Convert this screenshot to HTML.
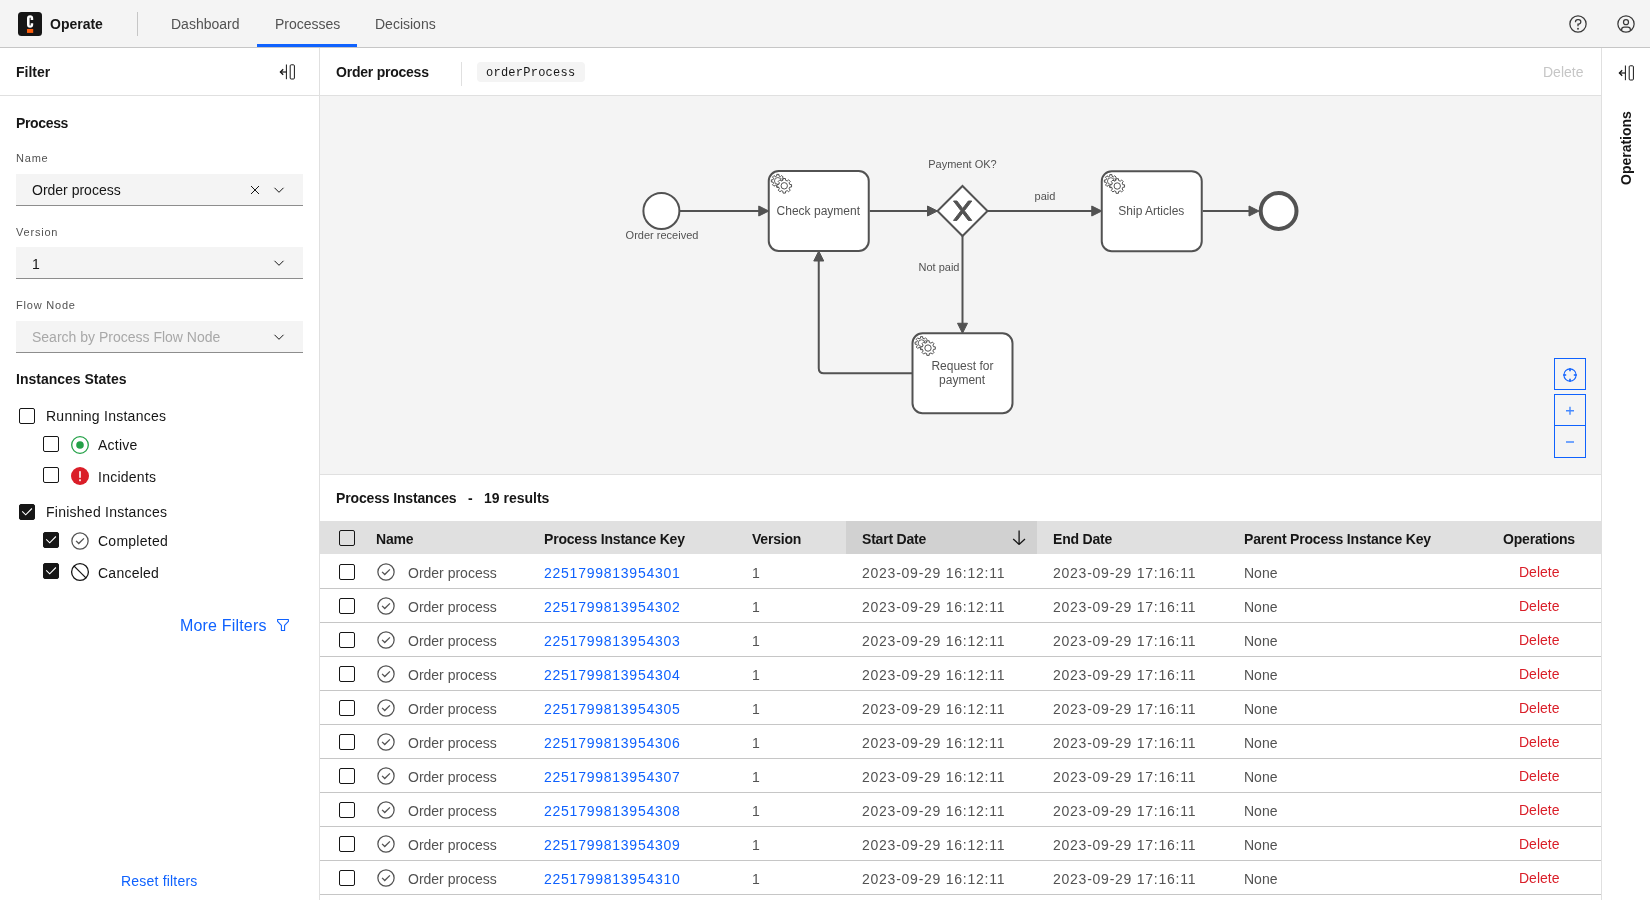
<!DOCTYPE html>
<html><head><meta charset="utf-8">
<style>
*{box-sizing:border-box;margin:0;padding:0}
html,body{width:1650px;height:900px;overflow:hidden;background:#fff;font-family:"Liberation Sans",sans-serif;color:#161616}
.a{position:absolute;white-space:nowrap}
#hdr{position:absolute;left:0;top:0;width:1650px;height:48px;background:#f4f4f4;border-bottom:1px solid #c6c6c6}
.nav{font-size:14px;color:#525252;top:15px;line-height:18px}
.b{font-weight:700}
#left{position:absolute;left:0;top:48px;width:320px;height:852px;background:#fff;border-right:1px solid #e0e0e0}
.lbl{font-size:11px;color:#525252;line-height:14px;letter-spacing:0.8px}
.inp{position:absolute;left:16px;width:287px;height:32px;background:#f4f4f4;border-bottom:1px solid #8d8d8d}
.cb{position:absolute;width:16px;height:16px;border:1px solid #161616;border-radius:2px;background:#fff}
.cb.on{background:#161616}
.ft{font-size:14px;color:#161616;line-height:18px}
#main{position:absolute;left:320px;top:48px;width:1281px;height:852px;background:#fff}
#right{position:absolute;left:1601px;top:48px;width:49px;height:852px;background:#fff;border-left:1px solid #e0e0e0}
.th{font-size:14px;font-weight:700;line-height:18px;top:530px;letter-spacing:-0.2px;color:#161616}
.td{font-size:14px;line-height:18px;color:#525252}
.num{letter-spacing:0.75px}
</style></head><body><div style="position:absolute;left:0;top:0;width:1650px;height:900px;will-change:transform;overflow:hidden">
<div id="hdr">
  <div class="a" style="left:18px;top:12px;width:24px;height:24px;background:#161616;border-radius:3.5px"></div>
  <svg class="a" style="left:0;top:0" width="48" height="48" viewBox="0 0 48 48"><path fill="#fff" d="M30.1 15.3C32.1 15.3 33.2 16.4 33.2 18.3V19.9H30.7V18.2C30.7 17.6 30.5 17.4 30.15 17.4C29.8 17.4 29.6 17.6 29.6 18.2V24.8C29.6 25.4 29.8 25.6 30.15 25.6C30.5 25.6 30.7 25.4 30.7 24.8V23.3H33.2V24.7C33.2 26.6 32.1 27.7 30.1 27.7C28.1 27.7 27 26.6 27 24.7V18.3C27 16.4 28.1 15.3 30.1 15.3Z"/><rect x="27" y="29" width="6.2" height="3.9" fill="#fc5d0d"/></svg>
  <div class="a b" style="left:50px;top:15px;font-size:14px;line-height:18px;color:#161616">Operate</div>
  <div class="a" style="left:137px;top:12px;width:1px;height:24px;background:#c6c6c6"></div>
  <div class="a nav" style="left:171px">Dashboard</div>
  <div class="a nav" style="left:275px">Processes</div>
  <div class="a nav" style="left:375px">Decisions</div>
  <div class="a" style="left:257px;top:44px;width:100px;height:3px;background:#0f62fe"></div>
  <svg class="a" style="left:1568px;top:14px" width="20" height="20" viewBox="0 0 32 32" fill="#393939"><path d="M16,2A14,14,0,1,0,30,16,14,14,0,0,0,16,2Zm0,26A12,12,0,1,1,28,16,12,12,0,0,1,16,28Z"/><circle cx="16" cy="23.5" r="1.5"/><path d="M17,8H15.5A4.49,4.49,0,0,0,11,12.5V13h2v-.5A2.5,2.5,0,0,1,15.5,10H17a2.5,2.5,0,0,1,0,5H15v4.5h2V17a4.5,4.5,0,0,0,0-9Z"/></svg>
  <svg class="a" style="left:1616px;top:14px" width="20" height="20" viewBox="0 0 32 32" fill="#393939"><path d="M16,8a5,5,0,1,0,5,5A5,5,0,0,0,16,8Zm0,8a3,3,0,1,1,3-3A3.0034,3.0034,0,0,1,16,16Z"/><path d="M16,2A14,14,0,1,0,30,16,14.0158,14.0158,0,0,0,16,2ZM10,26.3765V25a3.0033,3.0033,0,0,1,3-3h6a3.0033,3.0033,0,0,1,3,3v1.3765a11.8989,11.8989,0,0,1-12,0Zm13.9925-1.4507A5.0016,5.0016,0,0,0,19,20H13a5.0016,5.0016,0,0,0-4.9925,4.9258,12,12,0,1,1,15.985,0Z"/></svg>
</div>
<div id="left">
  <div class="a b" style="left:16px;top:15px;font-size:14px;line-height:18px">Filter</div>
  <svg class="a" style="left:270px;top:8px" width="40" height="32" viewBox="0 0 40 32" fill="none" stroke="#161616">
    <path d="M10.6 16H16.4" stroke-width="1.2"/><path d="M13.2 13.2L10.4 16L13.2 18.8" stroke-width="1.3"/>
    <path d="M16.4 8.5V23.2" stroke-width="1"/><rect x="20.2" y="8.8" width="4.2" height="14.2" rx="1" stroke-width="1"/>
  </svg>
  <div class="a" style="left:0;top:47px;width:319px;height:1px;background:#e0e0e0"></div>
  <div class="a b" style="left:16px;top:66px;font-size:14px;line-height:18px;letter-spacing:-0.35px">Process</div>
  <div class="a lbl" style="left:16px;top:103px">Name</div>
  <div class="inp" style="top:126px"></div>
  <div class="a ft" style="left:32px;top:133px">Order process</div>
  <svg class="a" style="left:249px;top:136px" width="12" height="12" viewBox="0 0 12 12" stroke="#161616" stroke-width="1"><path d="M2 2L10 10M10 2L2 10"/></svg>
  <svg class="a" style="left:271px;top:134px" width="16" height="16" viewBox="0 0 16 16" fill="none" stroke="#161616" stroke-width="1"><path d="M3.5 5.8L8 10.3L12.5 5.8"/></svg>
  <div class="a lbl" style="left:16px;top:177px">Version</div>
  <div class="inp" style="top:199px"></div>
  <div class="a ft" style="left:32px;top:207px">1</div>
  <svg class="a" style="left:271px;top:207px" width="16" height="16" viewBox="0 0 16 16" fill="none" stroke="#161616" stroke-width="1"><path d="M3.5 5.8L8 10.3L12.5 5.8"/></svg>
  <div class="a lbl" style="left:16px;top:250px">Flow Node</div>
  <div class="inp" style="top:273px"></div>
  <div class="a ft" style="left:32px;top:280px;color:#a8a8a8">Search by Process Flow Node</div>
  <svg class="a" style="left:271px;top:281px" width="16" height="16" viewBox="0 0 16 16" fill="none" stroke="#161616" stroke-width="1"><path d="M3.5 5.8L8 10.3L12.5 5.8"/></svg>
  <div class="a b" style="left:16px;top:322px;font-size:14px;line-height:18px">Instances States</div>
  <div class="cb" style="left:19px;top:360px"></div>
  <div class="a ft" style="left:46px;top:359px;letter-spacing:0.25px">Running Instances</div>
  <div class="cb" style="left:43px;top:388px"></div>
  <svg class="a" style="left:70px;top:387px" width="20" height="20" viewBox="0 0 20 20"><circle cx="10" cy="10" r="8.3" fill="none" stroke="#24a148" stroke-width="1.3"/><circle cx="10" cy="10" r="3.8" fill="#24a148"/></svg>
  <div class="a ft" style="left:98px;top:388px;letter-spacing:0.25px">Active</div>
  <div class="cb" style="left:43px;top:419px"></div>
  <svg class="a" style="left:70px;top:418px" width="20" height="20" viewBox="0 0 20 20"><circle cx="10" cy="10" r="9" fill="#da1e28"/><rect x="9.2" y="5.2" width="1.6" height="6.6" fill="#fff"/><rect x="9.2" y="13.3" width="1.6" height="1.9" fill="#fff"/></svg>
  <div class="a ft" style="left:98px;top:420px;letter-spacing:0.25px">Incidents</div>
  <div class="cb on" style="left:19px;top:456px"><svg width="14" height="14" viewBox="0 0 14 14" style="position:absolute;left:0;top:0"><path d="M2.2 6.4L5.7 9.8L11.9 3.5" fill="none" stroke="#fff" stroke-width="1.1"/></svg></div>
  <div class="a ft" style="left:46px;top:455px;letter-spacing:0.25px">Finished Instances</div>
  <div class="cb on" style="left:43px;top:484px"><svg width="14" height="14" viewBox="0 0 14 14" style="position:absolute;left:0;top:0"><path d="M2.2 6.4L5.7 9.8L11.9 3.5" fill="none" stroke="#fff" stroke-width="1.1"/></svg></div>
  <svg class="a" style="left:70px;top:483px" width="20" height="20" viewBox="0 0 32 32" fill="#525252"><path d="M14 21.414 9 16.413 10.413 15 14 18.586 21.585 11 23 12.415 14 21.414z"/><path d="M16 2a14 14 0 1 0 14 14A14 14 0 0 0 16 2Zm0 26a12 12 0 1 1 12-12 12 12 0 0 1-12 12Z"/></svg>
  <div class="a ft" style="left:98px;top:484px;letter-spacing:0.25px">Completed</div>
  <div class="cb on" style="left:43px;top:515px"><svg width="14" height="14" viewBox="0 0 14 14" style="position:absolute;left:0;top:0"><path d="M2.2 6.4L5.7 9.8L11.9 3.5" fill="none" stroke="#fff" stroke-width="1.1"/></svg></div>
  <svg class="a" style="left:70px;top:514px" width="20" height="20" viewBox="0 0 20 20" fill="none" stroke="#161616"><circle cx="10" cy="10" r="8.4" stroke-width="1.3"/><path d="M4.1 4.1L15.9 15.9" stroke-width="1.3"/></svg>
  <div class="a ft" style="left:98px;top:516px;letter-spacing:0.25px">Canceled</div>
  <div class="a" style="left:180px;top:568px;font-size:16px;line-height:20px;color:#0f62fe;letter-spacing:0.18px">More Filters</div>
  <svg class="a" style="left:275px;top:569px" width="16" height="16" viewBox="0 0 16 16" fill="none" stroke="#0f62fe" stroke-width="1.1"><path d="M2.6 2.5H13.4V4.4L9.6 8.4V13.5H6.4V8.4L2.6 4.4Z" stroke-linejoin="round"/></svg>
  <div class="a" style="left:121px;top:824px;font-size:14px;line-height:18px;color:#0f62fe;letter-spacing:0.2px">Reset filters</div>
</div>
<div id="main">
  <div class="a b" style="left:16px;top:15px;font-size:14px;line-height:18px;letter-spacing:-0.23px">Order process</div>
  <div class="a" style="left:141px;top:14px;width:1px;height:24px;background:#e0e0e0"></div>
  <div class="a" style="left:157px;top:14px;width:108px;height:20px;background:#f4f4f4;border-radius:4px"></div>
  <div class="a" style="left:166px;top:17px;font-family:'Liberation Mono',monospace;font-size:12px;letter-spacing:0.25px;line-height:16px;color:#161616">orderProcess</div>
  <div class="a" style="left:1223px;top:15px;font-size:14px;line-height:18px;color:#c6c6c6">Delete</div>
  <div class="a" style="left:0;top:47px;width:1281px;height:1px;background:#e0e0e0"></div>
  <div class="a" style="left:0;top:48px;width:1281px;height:379px;background:#f4f4f4;border-bottom:1px solid #e0e0e0"></div>
<!--DIAG--><svg class="a" style="left:0;top:48px" width="1281" height="378" viewBox="320 96 1281 378" font-family="Liberation Sans, sans-serif">
<path d="M680 211H760.75" stroke="#525252" stroke-width="2" fill="none"/>
<polygon points="768.75,211 758.75,206 758.75,216" fill="#525252" stroke="#525252" stroke-width="1" stroke-linejoin="round"/>
<path d="M869.75 211H929" stroke="#525252" stroke-width="2" fill="none"/>
<polygon points="937.5,211 927.5,206 927.5,216" fill="#525252" stroke="#525252" stroke-width="1" stroke-linejoin="round"/>
<path d="M987 211H1093.75" stroke="#525252" stroke-width="2" fill="none"/>
<polygon points="1101.75,211 1091.75,206 1091.75,216" fill="#525252" stroke="#525252" stroke-width="1" stroke-linejoin="round"/>
<path d="M1202.75 211H1252" stroke="#525252" stroke-width="2" fill="none"/>
<polygon points="1259,211 1249,206 1249,216" fill="#525252" stroke="#525252" stroke-width="1" stroke-linejoin="round"/>
<path d="M962.5 236V325.25" stroke="#525252" stroke-width="2" fill="none"/>
<polygon points="962.5,333.25 957.5,323.25 967.5,323.25" fill="#525252" stroke="#525252" stroke-width="1" stroke-linejoin="round"/>
<path d="M912.5 373.25H823.75Q818.75 373.25 818.75 368.25V259" stroke="#525252" stroke-width="2" fill="none"/>
<polygon points="818.75,251 813.75,261 823.75,261" fill="#525252" stroke="#525252" stroke-width="1" stroke-linejoin="round"/>
<circle cx="661.4" cy="211" r="18" fill="#fff" stroke="#525252" stroke-width="2"/>
<circle cx="1278.6" cy="211" r="17.9" fill="#fff" stroke="#525252" stroke-width="4"/>
<rect x="768.75" y="171" width="100" height="80" rx="10" fill="#fff" stroke="#525252" stroke-width="2"/><path d="M782.72 179.77 L784.36 179.82 L784.36 181.98 L782.72 182.03 L782.09 183.55 L783.22 184.74 L781.69 186.27 L780.50 185.14 L778.98 185.77 L778.93 187.41 L776.77 187.41 L776.72 185.77 L775.20 185.14 L774.01 186.27 L772.48 184.74 L773.61 183.55 L772.98 182.03 L771.34 181.98 L771.34 179.82 L772.98 179.77 L773.61 178.25 L772.48 177.06 L774.01 175.53 L775.20 176.66 L776.72 176.03 L776.77 174.39 L778.93 174.39 L778.98 176.03 L780.50 176.66 L781.69 175.53 L783.22 177.06 L782.09 178.25Z" fill="#fff" stroke="#525252" stroke-width="1"/><circle cx="777.85" cy="180.9" r="3.4" fill="none" stroke="#525252" stroke-width="0.9"/><path d="M789.80 184.51 L791.55 184.59 L791.55 187.01 L789.80 187.09 L789.09 188.82 L790.27 190.10 L788.55 191.82 L787.27 190.64 L785.54 191.35 L785.46 193.10 L783.04 193.10 L782.96 191.35 L781.23 190.64 L779.95 191.82 L778.23 190.10 L779.41 188.82 L778.70 187.09 L776.95 187.01 L776.95 184.59 L778.70 184.51 L779.41 182.78 L778.23 181.50 L779.95 179.78 L781.23 180.96 L782.96 180.25 L783.04 178.50 L785.46 178.50 L785.54 180.25 L787.27 180.96 L788.55 179.78 L790.27 181.50 L789.09 182.78Z" fill="#fff" stroke="#525252" stroke-width="1"/><circle cx="784.25" cy="185.8" r="3.2" fill="#fff" stroke="#525252" stroke-width="1"/>
<rect x="1101.75" y="171.2" width="100" height="80" rx="10" fill="#fff" stroke="#525252" stroke-width="2"/><path d="M1115.72 179.97 L1117.36 180.02 L1117.36 182.18 L1115.72 182.23 L1115.09 183.75 L1116.22 184.94 L1114.69 186.47 L1113.50 185.34 L1111.98 185.97 L1111.93 187.61 L1109.77 187.61 L1109.72 185.97 L1108.20 185.34 L1107.01 186.47 L1105.48 184.94 L1106.61 183.75 L1105.98 182.23 L1104.34 182.18 L1104.34 180.02 L1105.98 179.97 L1106.61 178.45 L1105.48 177.26 L1107.01 175.73 L1108.20 176.86 L1109.72 176.23 L1109.77 174.59 L1111.93 174.59 L1111.98 176.23 L1113.50 176.86 L1114.69 175.73 L1116.22 177.26 L1115.09 178.45Z" fill="#fff" stroke="#525252" stroke-width="1"/><circle cx="1110.85" cy="181.1" r="3.4" fill="none" stroke="#525252" stroke-width="0.9"/><path d="M1122.80 184.71 L1124.55 184.79 L1124.55 187.21 L1122.80 187.29 L1122.09 189.02 L1123.27 190.30 L1121.55 192.02 L1120.27 190.84 L1118.54 191.55 L1118.46 193.30 L1116.04 193.30 L1115.96 191.55 L1114.23 190.84 L1112.95 192.02 L1111.23 190.30 L1112.41 189.02 L1111.70 187.29 L1109.95 187.21 L1109.95 184.79 L1111.70 184.71 L1112.41 182.98 L1111.23 181.70 L1112.95 179.98 L1114.23 181.16 L1115.96 180.45 L1116.04 178.70 L1118.46 178.70 L1118.54 180.45 L1120.27 181.16 L1121.55 179.98 L1123.27 181.70 L1122.09 182.98Z" fill="#fff" stroke="#525252" stroke-width="1"/><circle cx="1117.25" cy="186.0" r="3.2" fill="#fff" stroke="#525252" stroke-width="1"/>
<rect x="912.5" y="333.25" width="100" height="80" rx="10" fill="#fff" stroke="#525252" stroke-width="2"/><path d="M926.47 342.02 L928.11 342.07 L928.11 344.23 L926.47 344.28 L925.84 345.80 L926.97 346.99 L925.44 348.52 L924.25 347.39 L922.73 348.02 L922.68 349.66 L920.52 349.66 L920.47 348.02 L918.95 347.39 L917.76 348.52 L916.23 346.99 L917.36 345.80 L916.73 344.28 L915.09 344.23 L915.09 342.07 L916.73 342.02 L917.36 340.50 L916.23 339.31 L917.76 337.78 L918.95 338.91 L920.47 338.28 L920.52 336.64 L922.68 336.64 L922.73 338.28 L924.25 338.91 L925.44 337.78 L926.97 339.31 L925.84 340.50Z" fill="#fff" stroke="#525252" stroke-width="1"/><circle cx="921.6" cy="343.15" r="3.4" fill="none" stroke="#525252" stroke-width="0.9"/><path d="M933.55 346.76 L935.30 346.84 L935.30 349.26 L933.55 349.34 L932.84 351.07 L934.02 352.35 L932.30 354.07 L931.02 352.89 L929.29 353.60 L929.21 355.35 L926.79 355.35 L926.71 353.60 L924.98 352.89 L923.70 354.07 L921.98 352.35 L923.16 351.07 L922.45 349.34 L920.70 349.26 L920.70 346.84 L922.45 346.76 L923.16 345.03 L921.98 343.75 L923.70 342.03 L924.98 343.21 L926.71 342.50 L926.79 340.75 L929.21 340.75 L929.29 342.50 L931.02 343.21 L932.30 342.03 L934.02 343.75 L932.84 345.03Z" fill="#fff" stroke="#525252" stroke-width="1"/><circle cx="928.0" cy="348.05" r="3.2" fill="#fff" stroke="#525252" stroke-width="1"/>
<polygon points="962.5,186 987.5,211 962.5,236 937.5,211" fill="#fff" stroke="#525252" stroke-width="2" stroke-linejoin="miter"/>
<path d="m 953.5,201 7.4286,9.714 -7.4286,9.714 3.4286,0 5.714,-7.464 5.714,7.464 3.4286,0 -7.4286,-9.714 7.4286,-9.714 -3.4286,0 -5.714,7.464 -5.714,-7.464 -3.4286,0 z" fill="#525252" stroke="#525252" stroke-width="1"/>
<text x="818.3" y="214.6" font-size="12" fill="#525252" text-anchor="middle">Check payment</text>
<text x="1151.3" y="214.6" font-size="12" fill="#525252" text-anchor="middle">Ship Articles</text>
<text x="962.4" y="369.9" font-size="12" fill="#525252" text-anchor="middle">Request for</text>
<text x="962.1" y="383.7" font-size="12" fill="#525252" text-anchor="middle">payment</text>
<text x="662" y="238.7" font-size="11" fill="#525252" text-anchor="middle">Order received</text>
<text x="962.5" y="168" font-size="11" fill="#525252" text-anchor="middle">Payment OK?</text>
<text x="1045" y="199.9" font-size="11" fill="#525252" text-anchor="middle">paid</text>
<text x="939" y="271.1" font-size="11" fill="#525252" text-anchor="middle">Not paid</text>
</svg><!--/DIAG-->
<div class="a" style="left:1234px;top:310px;width:32px;height:32px;border:1px solid #0f62fe"></div>
<svg class="a" style="left:1234px;top:310px" width="32" height="32" viewBox="0 0 32 32" fill="none" stroke="#0f62fe" stroke-width="1.1"><circle cx="16" cy="17" r="6.1"/><path d="M16 10.2V13.2M16 20.8V23.8M9.2 17H12.2M19.8 17H22.8" stroke-width="1.6"/></svg>
<div class="a" style="left:1234px;top:346px;width:32px;height:64px;border:1px solid #0f62fe"></div>
<div class="a" style="left:1234px;top:377px;width:32px;height:1px;background:#0f62fe"></div>
<svg class="a" style="left:1234px;top:346px" width="32" height="64" viewBox="0 0 32 64" fill="none" stroke="#4589ff" stroke-width="1.4"><path d="M12 16.8H20M16 12.8V20.8M12 48H20"/></svg>

</div>
<div id="right">
  <svg class="a" style="left:7px;top:9px" width="40" height="32" viewBox="0 0 40 32" fill="none" stroke="#161616">
    <path d="M10.6 16H16.4" stroke-width="1.2"/><path d="M13.2 13.2L10.4 16L13.2 18.8" stroke-width="1.3"/>
    <path d="M16.4 8.5V23.2" stroke-width="1"/><rect x="20.2" y="8.8" width="4.2" height="14.2" rx="1" stroke-width="1"/>
  </svg>
  <div class="a b" style="left:-12px;top:92px;width:72px;font-size:14px;line-height:18px;transform:rotate(-90deg);transform-origin:36px 9px">Operations</div>
</div>
<!--TBL--><div id="tbl">
<div class="a b" style="left:336px;top:489px;font-size:14px;line-height:18px;letter-spacing:-0.15px">Process Instances</div>
<div class="a b" style="left:468px;top:489px;font-size:14px;line-height:18px">-</div>
<div class="a b" style="left:484px;top:489px;font-size:14px;line-height:18px">19 results</div>
<div class="a" style="left:320px;top:521px;width:1281px;height:33px;background:#e0e0e0"></div>
<div class="a" style="left:846px;top:521px;width:191px;height:33px;background:#d1d1d1"></div>
<div class="cb" style="left:339px;top:530px;background:transparent"></div>
<div class="a th" style="left:376px">Name</div>
<div class="a th" style="left:544px">Process Instance Key</div>
<div class="a th" style="left:752px">Version</div>
<div class="a th" style="left:862px">Start Date</div>
<div class="a th" style="left:1053px">End Date</div>
<div class="a th" style="left:1244px">Parent Process Instance Key</div>
<div class="a th" style="left:1502px;width:74px;text-align:center">Operations</div>
<svg class="a" style="left:1011px;top:529px" width="16" height="16" viewBox="0 0 16 16" fill="none" stroke="#161616" stroke-width="1.3"><path d="M8.1 1.4V15.2M2.2 10L8.1 15.4L14 10"/></svg>
<div class="a" style="left:320px;top:588px;width:1281px;height:1px;background:#c6c6c6"></div>
<div class="cb" style="left:339px;top:564px"></div>
<svg class="a" style="left:376px;top:562px" width="20" height="20" viewBox="0 0 32 32" fill="#525252"><path d="M14 21.414 9 16.413 10.413 15 14 18.586 21.585 11 23 12.415 14 21.414z"/><path d="M16 2a14 14 0 1 0 14 14A14 14 0 0 0 16 2Zm0 26a12 12 0 1 1 12-12 12 12 0 0 1-12 12Z"/></svg>
<div class="a td" style="left:408px;top:564px">Order process</div>
<div class="a td num" style="left:544px;top:564px;color:#0f62fe">2251799813954301</div>
<div class="a td" style="left:752px;top:564px">1</div>
<div class="a td num" style="left:862px;top:564px">2023-09-29 16:12:11</div>
<div class="a td num" style="left:1053px;top:564px">2023-09-29 17:16:11</div>
<div class="a td" style="left:1244px;top:564px">None</div>
<div class="a td" style="left:1519px;top:563px;color:#da1e28">Delete</div>
<div class="a" style="left:320px;top:622px;width:1281px;height:1px;background:#c6c6c6"></div>
<div class="cb" style="left:339px;top:598px"></div>
<svg class="a" style="left:376px;top:596px" width="20" height="20" viewBox="0 0 32 32" fill="#525252"><path d="M14 21.414 9 16.413 10.413 15 14 18.586 21.585 11 23 12.415 14 21.414z"/><path d="M16 2a14 14 0 1 0 14 14A14 14 0 0 0 16 2Zm0 26a12 12 0 1 1 12-12 12 12 0 0 1-12 12Z"/></svg>
<div class="a td" style="left:408px;top:598px">Order process</div>
<div class="a td num" style="left:544px;top:598px;color:#0f62fe">2251799813954302</div>
<div class="a td" style="left:752px;top:598px">1</div>
<div class="a td num" style="left:862px;top:598px">2023-09-29 16:12:11</div>
<div class="a td num" style="left:1053px;top:598px">2023-09-29 17:16:11</div>
<div class="a td" style="left:1244px;top:598px">None</div>
<div class="a td" style="left:1519px;top:597px;color:#da1e28">Delete</div>
<div class="a" style="left:320px;top:656px;width:1281px;height:1px;background:#c6c6c6"></div>
<div class="cb" style="left:339px;top:632px"></div>
<svg class="a" style="left:376px;top:630px" width="20" height="20" viewBox="0 0 32 32" fill="#525252"><path d="M14 21.414 9 16.413 10.413 15 14 18.586 21.585 11 23 12.415 14 21.414z"/><path d="M16 2a14 14 0 1 0 14 14A14 14 0 0 0 16 2Zm0 26a12 12 0 1 1 12-12 12 12 0 0 1-12 12Z"/></svg>
<div class="a td" style="left:408px;top:632px">Order process</div>
<div class="a td num" style="left:544px;top:632px;color:#0f62fe">2251799813954303</div>
<div class="a td" style="left:752px;top:632px">1</div>
<div class="a td num" style="left:862px;top:632px">2023-09-29 16:12:11</div>
<div class="a td num" style="left:1053px;top:632px">2023-09-29 17:16:11</div>
<div class="a td" style="left:1244px;top:632px">None</div>
<div class="a td" style="left:1519px;top:631px;color:#da1e28">Delete</div>
<div class="a" style="left:320px;top:690px;width:1281px;height:1px;background:#c6c6c6"></div>
<div class="cb" style="left:339px;top:666px"></div>
<svg class="a" style="left:376px;top:664px" width="20" height="20" viewBox="0 0 32 32" fill="#525252"><path d="M14 21.414 9 16.413 10.413 15 14 18.586 21.585 11 23 12.415 14 21.414z"/><path d="M16 2a14 14 0 1 0 14 14A14 14 0 0 0 16 2Zm0 26a12 12 0 1 1 12-12 12 12 0 0 1-12 12Z"/></svg>
<div class="a td" style="left:408px;top:666px">Order process</div>
<div class="a td num" style="left:544px;top:666px;color:#0f62fe">2251799813954304</div>
<div class="a td" style="left:752px;top:666px">1</div>
<div class="a td num" style="left:862px;top:666px">2023-09-29 16:12:11</div>
<div class="a td num" style="left:1053px;top:666px">2023-09-29 17:16:11</div>
<div class="a td" style="left:1244px;top:666px">None</div>
<div class="a td" style="left:1519px;top:665px;color:#da1e28">Delete</div>
<div class="a" style="left:320px;top:724px;width:1281px;height:1px;background:#c6c6c6"></div>
<div class="cb" style="left:339px;top:700px"></div>
<svg class="a" style="left:376px;top:698px" width="20" height="20" viewBox="0 0 32 32" fill="#525252"><path d="M14 21.414 9 16.413 10.413 15 14 18.586 21.585 11 23 12.415 14 21.414z"/><path d="M16 2a14 14 0 1 0 14 14A14 14 0 0 0 16 2Zm0 26a12 12 0 1 1 12-12 12 12 0 0 1-12 12Z"/></svg>
<div class="a td" style="left:408px;top:700px">Order process</div>
<div class="a td num" style="left:544px;top:700px;color:#0f62fe">2251799813954305</div>
<div class="a td" style="left:752px;top:700px">1</div>
<div class="a td num" style="left:862px;top:700px">2023-09-29 16:12:11</div>
<div class="a td num" style="left:1053px;top:700px">2023-09-29 17:16:11</div>
<div class="a td" style="left:1244px;top:700px">None</div>
<div class="a td" style="left:1519px;top:699px;color:#da1e28">Delete</div>
<div class="a" style="left:320px;top:758px;width:1281px;height:1px;background:#c6c6c6"></div>
<div class="cb" style="left:339px;top:734px"></div>
<svg class="a" style="left:376px;top:732px" width="20" height="20" viewBox="0 0 32 32" fill="#525252"><path d="M14 21.414 9 16.413 10.413 15 14 18.586 21.585 11 23 12.415 14 21.414z"/><path d="M16 2a14 14 0 1 0 14 14A14 14 0 0 0 16 2Zm0 26a12 12 0 1 1 12-12 12 12 0 0 1-12 12Z"/></svg>
<div class="a td" style="left:408px;top:734px">Order process</div>
<div class="a td num" style="left:544px;top:734px;color:#0f62fe">2251799813954306</div>
<div class="a td" style="left:752px;top:734px">1</div>
<div class="a td num" style="left:862px;top:734px">2023-09-29 16:12:11</div>
<div class="a td num" style="left:1053px;top:734px">2023-09-29 17:16:11</div>
<div class="a td" style="left:1244px;top:734px">None</div>
<div class="a td" style="left:1519px;top:733px;color:#da1e28">Delete</div>
<div class="a" style="left:320px;top:792px;width:1281px;height:1px;background:#c6c6c6"></div>
<div class="cb" style="left:339px;top:768px"></div>
<svg class="a" style="left:376px;top:766px" width="20" height="20" viewBox="0 0 32 32" fill="#525252"><path d="M14 21.414 9 16.413 10.413 15 14 18.586 21.585 11 23 12.415 14 21.414z"/><path d="M16 2a14 14 0 1 0 14 14A14 14 0 0 0 16 2Zm0 26a12 12 0 1 1 12-12 12 12 0 0 1-12 12Z"/></svg>
<div class="a td" style="left:408px;top:768px">Order process</div>
<div class="a td num" style="left:544px;top:768px;color:#0f62fe">2251799813954307</div>
<div class="a td" style="left:752px;top:768px">1</div>
<div class="a td num" style="left:862px;top:768px">2023-09-29 16:12:11</div>
<div class="a td num" style="left:1053px;top:768px">2023-09-29 17:16:11</div>
<div class="a td" style="left:1244px;top:768px">None</div>
<div class="a td" style="left:1519px;top:767px;color:#da1e28">Delete</div>
<div class="a" style="left:320px;top:826px;width:1281px;height:1px;background:#c6c6c6"></div>
<div class="cb" style="left:339px;top:802px"></div>
<svg class="a" style="left:376px;top:800px" width="20" height="20" viewBox="0 0 32 32" fill="#525252"><path d="M14 21.414 9 16.413 10.413 15 14 18.586 21.585 11 23 12.415 14 21.414z"/><path d="M16 2a14 14 0 1 0 14 14A14 14 0 0 0 16 2Zm0 26a12 12 0 1 1 12-12 12 12 0 0 1-12 12Z"/></svg>
<div class="a td" style="left:408px;top:802px">Order process</div>
<div class="a td num" style="left:544px;top:802px;color:#0f62fe">2251799813954308</div>
<div class="a td" style="left:752px;top:802px">1</div>
<div class="a td num" style="left:862px;top:802px">2023-09-29 16:12:11</div>
<div class="a td num" style="left:1053px;top:802px">2023-09-29 17:16:11</div>
<div class="a td" style="left:1244px;top:802px">None</div>
<div class="a td" style="left:1519px;top:801px;color:#da1e28">Delete</div>
<div class="a" style="left:320px;top:860px;width:1281px;height:1px;background:#c6c6c6"></div>
<div class="cb" style="left:339px;top:836px"></div>
<svg class="a" style="left:376px;top:834px" width="20" height="20" viewBox="0 0 32 32" fill="#525252"><path d="M14 21.414 9 16.413 10.413 15 14 18.586 21.585 11 23 12.415 14 21.414z"/><path d="M16 2a14 14 0 1 0 14 14A14 14 0 0 0 16 2Zm0 26a12 12 0 1 1 12-12 12 12 0 0 1-12 12Z"/></svg>
<div class="a td" style="left:408px;top:836px">Order process</div>
<div class="a td num" style="left:544px;top:836px;color:#0f62fe">2251799813954309</div>
<div class="a td" style="left:752px;top:836px">1</div>
<div class="a td num" style="left:862px;top:836px">2023-09-29 16:12:11</div>
<div class="a td num" style="left:1053px;top:836px">2023-09-29 17:16:11</div>
<div class="a td" style="left:1244px;top:836px">None</div>
<div class="a td" style="left:1519px;top:835px;color:#da1e28">Delete</div>
<div class="a" style="left:320px;top:894px;width:1281px;height:1px;background:#c6c6c6"></div>
<div class="cb" style="left:339px;top:870px"></div>
<svg class="a" style="left:376px;top:868px" width="20" height="20" viewBox="0 0 32 32" fill="#525252"><path d="M14 21.414 9 16.413 10.413 15 14 18.586 21.585 11 23 12.415 14 21.414z"/><path d="M16 2a14 14 0 1 0 14 14A14 14 0 0 0 16 2Zm0 26a12 12 0 1 1 12-12 12 12 0 0 1-12 12Z"/></svg>
<div class="a td" style="left:408px;top:870px">Order process</div>
<div class="a td num" style="left:544px;top:870px;color:#0f62fe">2251799813954310</div>
<div class="a td" style="left:752px;top:870px">1</div>
<div class="a td num" style="left:862px;top:870px">2023-09-29 16:12:11</div>
<div class="a td num" style="left:1053px;top:870px">2023-09-29 17:16:11</div>
<div class="a td" style="left:1244px;top:870px">None</div>
<div class="a td" style="left:1519px;top:869px;color:#da1e28">Delete</div>
</div><!--/TBL-->
</div></body></html>
